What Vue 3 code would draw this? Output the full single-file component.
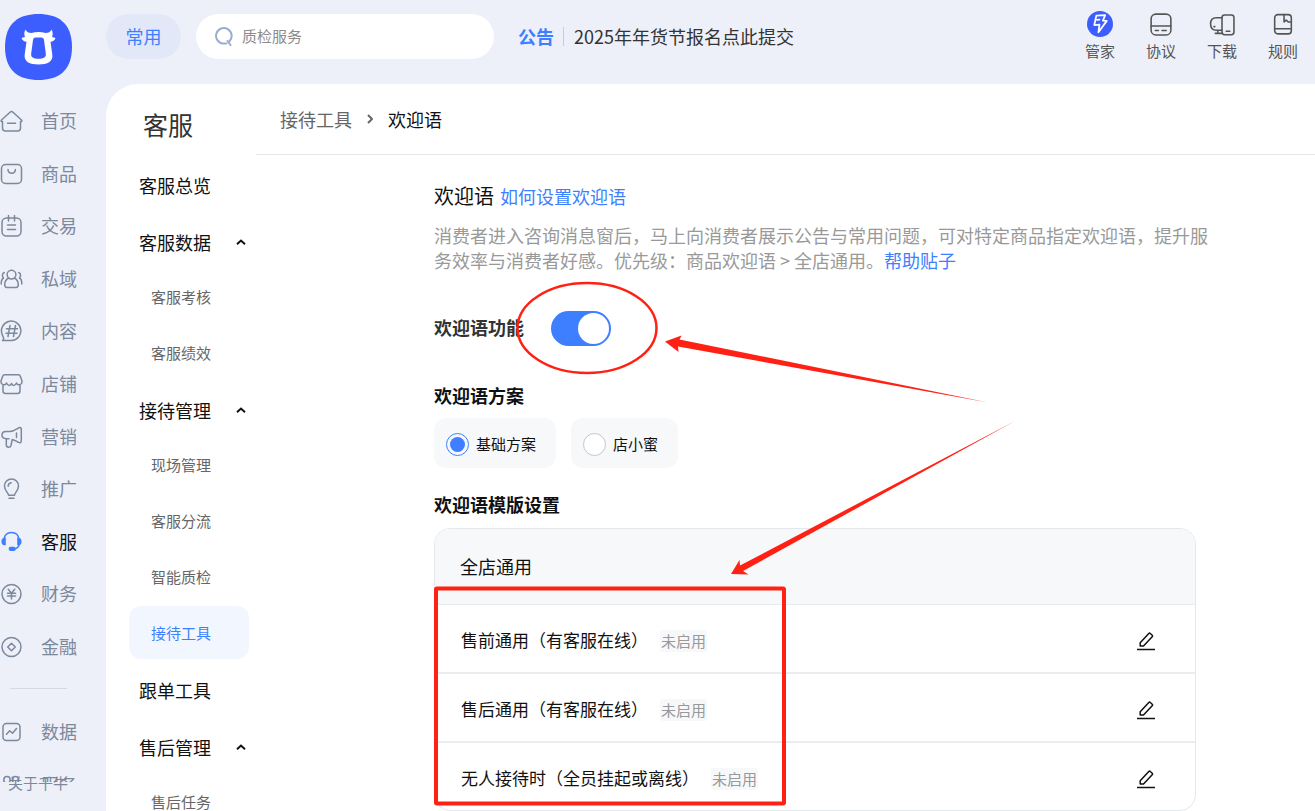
<script setup>
import { ref } from 'vue'

const navItems = [
  { name: '首页', icon: 'home' },
  { name: '商品', icon: 'goods' },
  { name: '交易', icon: 'trade' },
  { name: '私域', icon: 'people' },
  { name: '内容', icon: 'content' },
  { name: '店铺', icon: 'shop' },
  { name: '营销', icon: 'horn' },
  { name: '推广', icon: 'bulb' },
  { name: '客服', icon: 'service', active: true },
  { name: '财务', icon: 'yuan' },
  { name: '金融', icon: 'finance' }
]
const moreItems = [
  { name: '数据', icon: 'chart' },
  { name: '服务', icon: 'apps' }
]
const icons = {
  home: '<path d="M1.5 11 10 3.2a2.2 2.2 0 0 1 3 0L21.5 11c.8.8.3 1.600-.6 1.600h-.4V19a3 3 0 0 1-3 3h-12a3 3 0 0 1-3-3v-6.400h-.4c-.9 0-1.400-.8-.6-1.600ZM7.500 14.300h8"/>',
  goods: '<rect x="1.500" y="2.500" width="20" height="19" rx="4"/><path d="M8 7.500c.2 5 7.200 5 7.400 0"/>',
  trade: '<rect x="2" y="4" width="19" height="18" rx="4.500"/><path d="M8.500 1.500V7M14.500 1.500V7M7.500 11h8M7.500 15.500h8"/>',
  people: '<circle cx="11.500" cy="7.600" r="4.400"/><path d="M8.700 11C6 12.300 4.700 15 4.700 17.800 4.700 20 5.500 20.500 7 20.500h9c1.500 0 2.300-.5 2.300-2.700 0-2.800-1.300-5.500-4-6.800M4.300 5.500C1.800 6.500 2 9.500 3.500 11c-1.700 1-2.400 3-2.300 6M18.700 5.500c2.500 1 2.300 4 .8 5.500 1.700 1 2.400 3 2.300 6"/>',
  content: '<path d="M2.500 21.500h9A9.700 9.700 0 1 0 2.200 15.500c.4 1.700 1.500 3 1.500 4.200 0 .8-.6 1.300-1.200 1.800ZM10 6.500l-2 11M15.500 6.500l-2 11M6.500 9.800h11M6 14.300h11"/>',
  shop: '<path d="M4.500 2.800h14c1 0 1.500.5 1.800 1.400L22 9c.6 4-4.500 5-5.500 2-1.500 3.200-4 3.200-5 .5-1 2.700-3.500 2.700-5-.5-1 3-6.100 2-5.500-2l1.700-4.800c.3-.9.8-1.400 1.800-1.400ZM3 13v6c0 2 1 2.500 2.500 2.500h12c1.500 0 2.500-.5 2.500-2.500v-6"/>',
  horn: '<path d="M9.500 6.500c4 0 6.500-2.200 9.200-3.700 1.500-.6 2.600 0 2.600 1.500V16c0 1.500-1.100 2-2.600 1.400-2-.9-3.700-2.400-6.500-3l-1.200 6.100c-.3 1.200-1 1.800-2.400 1.800-1.500 0-2.300-.8-2.300-2.200v-6.300C3.500 13.500 2 12 2 10.200c0-2.300 1.500-3.700 4-3.700ZM6.300 13.800H9M16.500 8v4.500"/>',
  bulb: '<path d="M8.500 18.200c0-2.600-4-4.200-4-9.200a7 7 0 0 1 14 0c0 5-4 6.600-4 9.200ZM9 21.300h5M8.200 9.200c0-1.800 1.200-3.200 3-3.400"/>',
  service: '<path d="M4 9.500C4.500 5 7.500 2.500 11.500 2.500S18.500 5 19 9.500M19.500 14c-.7 2.700-2.500 4.500-5 5"/><path fill="currentColor" stroke="none" d="M5.800 7.800v7.400H4.500A3.200 3.200 0 0 1 1.500 12V11c0-1.800 1.200-3.200 3-3.200ZM17.200 7.800v7.400h1.300a3.200 3.200 0 0 0 3-3.200V11c0-1.800-1.200-3.200-3-3.200ZM10.500 16.800h3.200a2 2 0 0 1 0 4.200H11c-1.500 0-2.300-.8-2.300-2.200 0-1.200.7-2 1.800-2Z"/>',
  yuan: '<circle cx="11.500" cy="12" r="9.500"/><path d="m8.300 7.200 3.200 4 3.200-4M7.500 11.200h8M7.500 14h8M11.500 11.200V17"/>',
  finance: '<circle cx="11.500" cy="12" r="9.500"/><path d="m11.500 8.200 3.800 3.800-3.800 3.800L7.700 12Z"/>',
  chart: '<rect x="3" y="3.500" width="17" height="17" rx="3.500"/><path d="m6.500 14.200 3.200-3.500 2.800 2.500 4-4.700"/>',
  apps: '<circle cx="7" cy="6.800" r="3.200"/><circle cx="15.500" cy="6.800" r="3.200"/><circle cx="7" cy="17" r="3.200"/><circle cx="15.500" cy="17" r="3.200"/>',
  butler: '<circle cx="12.500" cy="12.500" r="12.500" fill="#3d5eff" stroke="none"/><path stroke="#fff" stroke-width="1.700" d="M9 4.500 17.500 4l-2.200 5.300 3.700.2L11 20.500l1-7.300-5 .3L9 4.500M9.500 8.500l2.500-.3"/>',
  deal: '<rect x="3" y="3" width="19" height="20" rx="4.500"/><path d="M3 14.500h19M7 18.800h3M13.500 18.800h4"/>',
  download: '<rect x="12.500" y="3.800" width="11.500" height="19" rx="2.500"/><path d="M12.500 6.500H7c-3.500 0-5.500 2-5.500 5.700 0 4 2 6.300 5.500 6.300h5.500M8.500 18.500v3M6 21.500h6.500M16.500 19.500h3.500M4.800 15h.8"/>',
  rule: '<rect x="4.500" y="3.500" width="16" height="18.500" rx="3"/><path d="M4.500 17h16M13.500 3.500v7l2-1.800 2 1.800h3"/>'
}
const tools = [
  { name: '管家', icon: 'butler' },
  { name: '协议', icon: 'deal' },
  { name: '下载', icon: 'download' },
  { name: '规则', icon: 'rule' }
]
const menu = ref([
  { name: '客服总览' },
  { name: '客服数据', children: ['客服考核', '客服绩效'] },
  { name: '接待管理', children: ['现场管理', '客服分流', '智能质检', '接待工具'] },
  { name: '跟单工具' },
  { name: '售后管理', children: ['售后任务'] }
])
const current = '接待工具'
const keyword = ref('')
const enabled = ref(true)
const plan = ref('basic')
const templates = ['售前通用（有客服在线）', '售后通用（有客服在线）', '无人接待时（全员挂起或离线）']
</script>

<template>
  <div class="page">
    <aside class="rail">
      <a href="#" class="logo" aria-label="千牛">
        <svg viewBox="0 0 67 66">
          <path fill="#3d5eff" d="M33.500 0C52 0 67 8 67 33S52 66 33.500 66 0 58 0 33 15 0 33.500 0Z" />
          <path fill="#fff" fill-rule="evenodd" d="M20.500 15.500c1 2.500 3 3.500 6 3.500 4.500-1.300 9.500-1.300 14 0 3 0 5-1 6-3.500 1.500 2.500 1.500 5 .5 7.500 1.500.2 2.700.5 3.500 1-1 2.500-2.700 3.800-5 3.800l1.800 12.700c1 7-4.800 10-13.800 10s-14.800-3-13.800-10l1.800-12.700c-2.300 0-4-1.300-5-3.800.8-.5 2-.8 3.500-1-1-2.500-1-5 .5-7.500ZM30.500 23.500c-1.500.2-2.300 1-2.500 2.500L26.200 39.500c-.5 3.800 2 5.200 7.300 5.200s7.800-1.400 7.300-5.200L39 26c-.2-1.500-1-2.300-2.500-2.500Z" />
        </svg>
      </a>
      <nav class="rail-nav">
        <a v-for="n in navItems" :key="n.name" href="#" class="rail-item" :class="{ active: n.active }">
          <svg class="icon" viewBox="0 0 24 24" v-html="icons[n.icon]" />
          <span>{{ n.name }}</span>
        </a>
      </nav>
      <hr class="rail-line">
      <nav class="rail-more">
        <a v-for="n in moreItems" :key="n.name" href="#" class="rail-item">
          <svg class="icon" viewBox="0 0 24 24" v-html="icons[n.icon]" />
          <span>{{ n.name }}</span>
        </a>
      </nav>
      <a href="#" class="about">关于千牛</a>
    </aside>

    <div class="body">
      <header class="top">
        <button type="button" class="common">常用</button>
        <label class="search">
          <svg viewBox="0 0 20 20"><path d="M15.500 15.200A7.800 7.800 0 1 0 9.200 17.600h3.300M13.500 15l3 4" /></svg>
          <input v-model="keyword" type="text" placeholder="质检服务" aria-label="搜索">
        </label>
        <div class="notice">
          <strong>公告</strong>
          <a href="#">2025年年货节报名点此提交</a>
        </div>
        <nav class="tools">
          <a v-for="t in tools" :key="t.name" href="#">
            <svg class="icon" viewBox="0 0 25 25" v-html="icons[t.icon]" />
            <span>{{ t.name }}</span>
          </a>
        </nav>
      </header>

      <div class="panel">
        <nav class="menu">
          <h1>客服</h1>
          <section v-for="g in menu" :key="g.name">
            <button type="button" class="group">
              <span>{{ g.name }}</span>
              <svg v-if="g.children" viewBox="0 0 10 6"><path d="M1 5.200 5 1.500l4 3.700" /></svg>
            </button>
            <ul v-if="g.children">
              <li v-for="c in g.children" :key="c">
                <a href="#" :class="{ current: c === current }">{{ c }}</a>
              </li>
            </ul>
          </section>
        </nav>

        <main class="main">
          <nav class="crumbs">
            <a href="#">接待工具</a>
            <svg viewBox="0 0 6 10"><path d="M1 1l4 4-4 4" /></svg>
            <span>欢迎语</span>
          </nav>
          <div class="content">
            <div class="title">
              <h2>欢迎语</h2>
              <a href="#">如何设置欢迎语</a>
            </div>
            <p class="intro">
              消费者进入咨询消息窗后，马上向消费者展示公告与常用问题，可对特定商品指定欢迎语，提升服务效率与消费者好感。优先级：商品欢迎语 &gt; 全店通用。<a href="#">帮助贴子</a>
            </p>
            <div class="switch-row">
              <label for="welcome">欢迎语功能</label>
              <input id="welcome" v-model="enabled" type="checkbox" role="switch">
            </div>
            <h3 class="plan-title">欢迎语方案</h3>
            <div class="plans">
              <label><input v-model="plan" type="radio" name="plan" value="basic">基础方案</label>
              <label><input v-model="plan" type="radio" name="plan" value="bee">店小蜜</label>
            </div>
            <h3 class="tpl-title">欢迎语模版设置</h3>
            <section class="card">
              <h4>全店通用</h4>
              <div v-for="t in templates" :key="t" class="row">
                <span>{{ t }}</span>
                <em>未启用</em>
                <button type="button" :aria-label="'编辑' + t">
                  <svg viewBox="0 0 20 20"><path d="M4.200 11.800 12.800 2.500c.5-.5 1-.5 1.500 0l1.900 1.700c.5.5.5 1 0 1.500L7.500 15H4.200ZM1 18.500h18" /></svg>
                </button>
              </div>
            </section>
          </div>
        </main>
      </div>
    </div>

    <svg class="marks" viewBox="0 0 1315 811" aria-hidden="true">
      <ellipse cx="587" cy="328" rx="69.500" ry="45" />
      <rect x="436" y="588.500" width="348" height="215" rx="1" />
      <path d="M665 341.500 681.500 335.500 679.500 339.500 988 402.500 678 346.500 678.500 352Z" />
      <path d="M731 574 739.500 560 740 565.500 1015 421 743 571 748.500 574.500Z" />
    </svg>
  </div>
</template>

<style>
body { margin: 0; }
</style>

<style scoped>
.page {
  position: relative;
  display: flex;
  height: 100vh;
  overflow: hidden;
  background: #edf0f9;
  color: #111;
  font-family: "Noto Sans CJK SC", sans-serif;
  font-size: 18px;
  line-height: 24px;
}
.page * { box-sizing: border-box; }
a { color: inherit; text-decoration: none; }
button { padding: 0; border: 0; background: none; color: inherit; font: inherit; cursor: pointer; }
h1, h2, h3, h4, p, ul { margin: 0; padding: 0; font-weight: 400; }
ul { list-style: none; }
svg { display: block; flex: none; }
.icon, .search svg, .group svg, .crumbs svg, .row svg {
  fill: none;
  stroke: currentColor;
  stroke-width: 1.5;
  stroke-linecap: round;
  stroke-linejoin: round;
}

.rail { flex: none; width: 106px; color: #7c889c; }
.logo { display: block; width: 67px; margin: 14px 0 15px 5px; }
.rail-nav { display: grid; grid-auto-rows: 1fr; height: 578px; }
.rail-item { display: flex; align-items: center; gap: 17px; }
.rail-item .icon { width: 24px; height: 24px; }
.rail-item span { padding-bottom: 2px; }
.rail-item.active span { color: #111; }
.rail-item.active .icon { color: #3d7fff; }
.rail-line { width: 57px; height: 1px; margin: 15px 0 16px 10px; border: 0; background: #d5d9e0; }
.rail-more { height: 77px; overflow: hidden; }
.rail-more .rail-item { height: 53px; }
.about { display: block; margin: -11px 0 0 8px; font-size: 15px; line-height: 24px; }

.body { display: flex; flex: 1; flex-direction: column; min-width: 0; }
.top { display: flex; flex: none; align-items: flex-start; height: 84px; padding: 14px 17px 0 0; }
.common { flex: none; width: 75px; height: 45px; padding-bottom: 2px; border-radius: 23px; background: #e2e8f7; color: #3d7fff; }
.search { display: flex; align-items: center; gap: 8px; width: 298px; height: 45px; margin-left: 15px; padding: 0 18px 2px; border-radius: 23px; background: #fff; }
.search svg { width: 20px; height: 20px; color: #99acd2; stroke-width: 2; }
.search input { flex: 1; min-width: 0; padding: 0; border: 0; outline: 0; background: none; font: inherit; font-size: 15px; }
.search input::placeholder { color: #8c8c8c; opacity: 1; }
.notice { display: flex; align-items: center; height: 44px; margin-left: 24px; color: #333; white-space: nowrap; }
.notice strong { color: #3d7fff; }
.notice a { margin-left: 9px; padding-left: 10px; border-left: 1px solid #b9cdf6; line-height: 19px; }
.tools { display: flex; gap: 31px; margin: -3px 0 0 auto; color: #555; font-size: 15px; white-space: nowrap; }
.tools a { display: flex; flex-direction: column; align-items: center; gap: 3px; }
.tools .icon { width: 26px; height: 26px; }
.tools span { line-height: 22px; }

.panel { display: flex; flex: 1; min-height: 0; border-radius: 32px 0 0 0; background: #fff; }
.menu { flex: none; width: 150px; padding: 24px 7px 0 23px; overflow: hidden; }
.menu h1 { margin: 0 0 19px 14px; color: #333; font-size: 25px; line-height: 32px; }
.menu section { margin-bottom: 5px; }
.group { display: flex; align-items: center; justify-content: space-between; width: 100%; height: 52px; padding: 0 3px 1px 10px; }
.group svg { width: 10px; height: 6px; stroke-width: 2; stroke-linecap: butt; stroke-linejoin: miter; }
.menu ul { display: grid; gap: 3px; padding-top: 2px; }
.menu li a { display: flex; align-items: center; height: 53px; padding-left: 22px; border-radius: 12px; color: #666; font-size: 15px; }
.menu li .current { background: #f2f7ff; color: #3d7fff; }

.main { flex: 1; min-width: 0; }
.crumbs { display: flex; align-items: center; height: 71px; padding-left: 24px; border-bottom: 1px solid #e6e7e9; }
.crumbs a, .crumbs svg { color: #666; }
.crumbs svg { width: 6px; height: 10px; margin: 0 15px; stroke-width: 2; stroke-linecap: butt; }
.content { max-width: 958px; padding: 26px 0 0 178px; }
.title { display: flex; align-items: center; gap: 6px; height: 30px; }
.title h2 { font-size: 20px; }
.title a, .intro a { color: #3d7fff; }
.intro { margin-top: 12px; color: #999; line-height: 25px; }
.switch-row { display: flex; align-items: center; gap: 27px; margin-top: 38px; color: #333; font-weight: 700; }
.switch-row label { padding-bottom: 4px; }
.switch-row input { display: flex; align-items: center; justify-content: flex-end; width: 60px; height: 35px; margin: 0; padding: 2px; border-radius: 18px; background: #3d7fff; appearance: none; }
.switch-row input::before { width: 31px; height: 31px; border-radius: 50%; background: #fff; content: ""; }
.switch-row input:not(:checked) { justify-content: flex-start; background: #ccc; }
h3 { font-size: 18px; }
.plan-title { margin-top: 37px; font-weight: 700; }
.plans { display: flex; gap: 15px; margin-top: 11px; font-size: 15px; }
.plans label { display: flex; align-items: center; gap: 7px; height: 50px; padding: 2px 20px 0 12px; border-radius: 12px; background: #f7f8fa; }
.plans input { width: 23px; height: 23px; margin: 0; border: 1px solid #c4c6cf; border-radius: 50%; background: #fff; appearance: none; }
.plans input:checked { padding: 3px; border-color: #3d7fff; background: #3d7fff content-box; }
.tpl-title { margin-top: 24px; font-weight: 700; }
.card { max-width: 762px; margin-top: 12px; overflow: hidden; border: 1px solid #e4e8ed; border-radius: 16px; }
.card h4 { height: 76px; padding: 25px 25px 0; border-bottom: 1px solid #e9ebee; background: #f7f8fa; font-size: 18px; }
.row { display: flex; align-items: center; height: 69px; padding: 4px 39px 0 26px; border-bottom: 2px solid #ebecee; font-size: 17px; }
.row:last-child { height: 67px; border-bottom: 0; }
.row span { padding-bottom: 2px; }
.row em { margin-left: 12px; padding: 0 1px; border-radius: 3px; background: #f7f8fa; color: #999; font-size: 15px; font-style: normal; line-height: 22px; }
.row button { margin-left: auto; }
.row svg { width: 20px; height: 20px; stroke-linecap: butt; }

.marks { position: absolute; top: 0; left: 0; width: 1315px; height: 811px; pointer-events: none; }
.marks ellipse { fill: none; stroke: #ff2113; stroke-width: 2.5; }
.marks rect { fill: none; stroke: #ff2113; stroke-width: 4; }
.marks path { fill: #ff2113; }
</style>
